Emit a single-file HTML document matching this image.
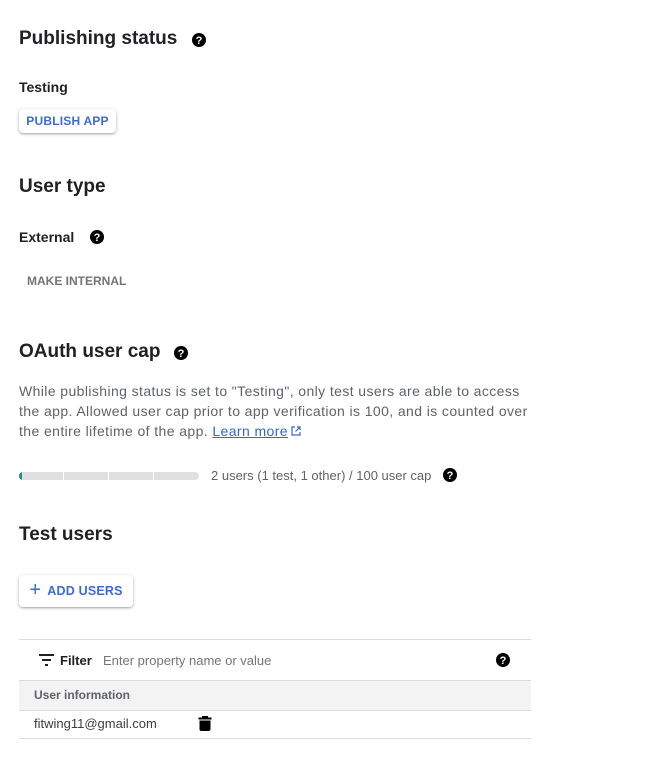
<!DOCTYPE html>
<html><head><meta charset="utf-8"><style>
body{margin:0;width:659px;height:764px;background:#fff;font-family:"Liberation Sans",Roboto,sans-serif;position:relative;overflow:hidden;color:#202124}
.a{position:absolute;white-space:nowrap}
h2{position:absolute;margin:0;font-size:19px;font-weight:bold;color:#202124;line-height:24px}
.b{font-size:14px;font-weight:bold;line-height:20px}
.q{position:absolute;width:14px;height:14px}
.btn{position:absolute;background:#fff;border-radius:4px;box-shadow:0 1px 3px rgba(0,0,0,.3),0 1px 1px rgba(0,0,0,.1);color:#3b6ad6;font-size:12px;font-weight:bold;display:flex;align-items:center;justify-content:center;letter-spacing:.2px}
</style></head><body>
<svg width="0" height="0" style="position:absolute"><defs><g id="q"><circle cx="7" cy="7" r="7" fill="#000"/><text x="7" y="11" text-anchor="middle" font-size="11" font-weight="bold" fill="#fff" font-family="Liberation Sans">?</text></g></defs></svg>

<h2 style="left:19px;top:27px">Publishing status</h2>
<svg class="q" style="left:192px;top:33px"><use href="#q"/></svg>
<div class="a b" style="left:19px;top:77px">Testing</div>
<div class="btn" style="left:19px;top:109px;width:97px;height:24px">PUBLISH APP</div>

<h2 style="left:19px;top:175px">User type</h2>
<div class="a b" style="left:19px;top:227px">External</div>
<svg class="q" style="left:90px;top:230px"><use href="#q"/></svg>
<div class="a" style="left:27px;top:274px;font-size:12px;font-weight:bold;color:#757575">MAKE INTERNAL</div>

<h2 style="left:19px;top:340px">OAuth user cap</h2>
<svg class="q" style="left:174px;top:346px"><use href="#q"/></svg>
<div class="a" style="left:19px;top:381px;font-size:14px;line-height:20px;color:#5f6368;letter-spacing:.4px">While publishing status is set to "Testing", only test users are able to access<br>the app. Allowed user cap prior to app verification is 100, and is counted over<br>the entire lifetime of the app. <span style="color:#3367d6;text-decoration:underline">Learn more</span><svg width="12" height="12" viewBox="0 0 12 12" style="margin-left:2px;vertical-align:-1px"><path d="M5 2H2v8h8V7M7 2h3v3M10 2L5.5 6.5" stroke="#3367d6" stroke-width="1.2" fill="none"/></svg></div>

<div class="a" style="left:19px;top:472px;width:180px;height:8px;background:#e0e0e0;border-radius:4px;overflow:hidden">
<div style="position:absolute;left:0;top:0;width:3px;height:8px;background:#1e8e7e"></div>
<div style="position:absolute;left:44px;top:0;width:1px;height:8px;background:#fff"></div>
<div style="position:absolute;left:89px;top:0;width:1px;height:8px;background:#fff"></div>
<div style="position:absolute;left:134px;top:0;width:1px;height:8px;background:#fff"></div>
</div>
<div class="a" style="left:211px;top:467px;font-size:13px;line-height:17px;color:#5f6368">2 users (1 test, 1 other) / 100 user cap</div>
<svg class="q" style="left:443px;top:468px"><use href="#q"/></svg>

<h2 style="left:19px;top:523px">Test users</h2>
<div class="btn" style="left:19px;top:575px;width:114px;height:32px;font-size:12.5px"><span style="font-size:20px;font-weight:normal;margin-right:6px;margin-top:-2px">+</span>ADD USERS</div>

<div class="a" style="left:19px;top:639px;width:512px;height:1px;background:#dadce0"></div>
<svg class="a" style="left:39px;top:654px" width="16" height="12"><path d="M0 1h15M3 6h9M6 11h3" stroke="#202124" stroke-width="2"/></svg>
<div class="a" style="left:60px;top:652px;font-size:13px;font-weight:bold;line-height:17px">Filter</div>
<div class="a" style="left:103px;top:652px;font-size:13px;line-height:17px;color:#757575">Enter property name or value</div>
<svg class="q" style="left:496px;top:653px"><use href="#q"/></svg>
<div class="a" style="left:19px;top:680px;width:512px;height:29px;background:#f3f3f3;border-top:1px solid #dadce0;border-bottom:1px solid #dadce0"></div>
<div class="a" style="left:34px;top:687px;font-size:12px;font-weight:bold;line-height:16px;color:#5f6368">User information</div>
<div class="a" style="left:34px;top:715px;font-size:13px;line-height:17px;color:#3c4043">fitwing11@gmail.com</div>
<svg class="a" style="left:198px;top:716px" width="14" height="15" viewBox="0 0 14 15"><path d="M4 0h6v1.5h3.5v2H.5v-2H4z M1.5 4.5h11V13q0 2-2 2h-7q-2 0-2-2z" fill="#000"/></svg>
<div class="a" style="left:19px;top:738px;width:512px;height:1px;background:#dadce0"></div>
</body></html>
